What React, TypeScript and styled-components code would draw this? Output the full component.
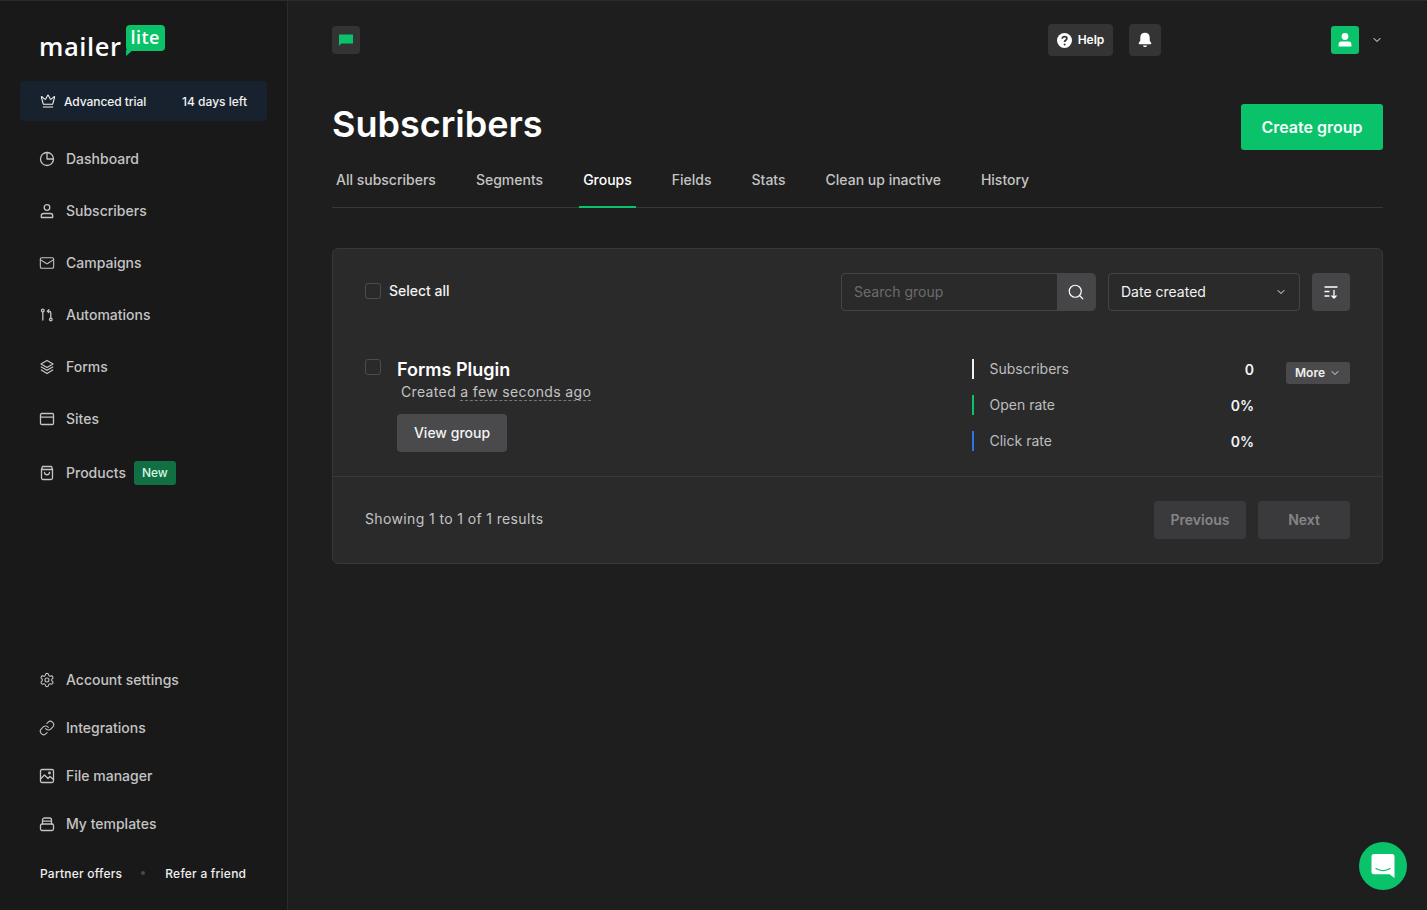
import React from "react"
import styled, { createGlobalStyle } from "styled-components"
import { Crown, Mail, Settings, Link, Search, ChevronDown } from "lucide-react"

const Global = createGlobalStyle`
  html, body { margin: 0; padding: 0; height: 100%; background: #1e1e1e; }
  body { font-family: Inter, "Liberation Sans", sans-serif; color: #fff; }
  * { box-sizing: border-box; }
`

const Page = styled.div`
  display: flex;
  height: 910px;
  overflow: hidden;
  border-top: 1px solid #2b2b2b;
`
const Sidebar = styled.aside`
  width: 288px;
  flex: none;
  background: #191919;
  border-right: 1px solid #2b2b2b;
  padding: 24px 20px 0;
  display: flex;
  flex-direction: column;
`
const LogoRow = styled.div`
  display: flex;
  align-items: flex-start;
  height: 56px;
  padding-left: 19px;
`
const LogoWord = styled.span`
  font-family: "Open Sans", sans-serif;
  font-size: 25.500px;
  font-weight: 600;
  letter-spacing: 0.600px;
  line-height: 32px;
  margin-top: 5px;
  color: #fff;
`
const LogoBubble = styled.span`
  position: relative;
  margin-left: 4px;
  width: 39px;
  height: 26px;
  background: #09c269;
  border-radius: 4px;
  font-family: "Open Sans", sans-serif;
  font-size: 18px;
  font-weight: 600;
  line-height: 25px;
  text-align: center;
  letter-spacing: 0.500px;
  &::after {
    content: "";
    position: absolute;
    left: 0;
    top: 25px;
    border-top: 6px solid #09c269;
    border-right: 7px solid transparent;
  }
`
const TrialBox = styled.div`
  height: 40px;
  background: #18222f;
  border-radius: 4px;
  display: flex;
  align-items: center;
  padding: 0 20px;
  font-size: 12px;
  font-weight: 500;
  color: #f2f2f2;
  margin-bottom: 12px;
  svg { margin-right: 8px; }
`
const TrialLeft = styled.span`
  flex: 1;
  letter-spacing: -0.060px;
`
const NavItem = styled.div<{ $h?: number; $gapTop?: number }>`
  display: flex;
  align-items: center;
  height: ${(p) => p.$h || 52}px;
  margin-top: ${(p) => p.$gapTop || 0}px;
  padding-left: 19px;
  font-size: 14px;
  font-weight: 500;
  color: #c4c4c4;
  svg { width: 16px; height: 16px; margin-right: 11px; flex: none; }
`
const NavLabel = styled.span`
  margin-bottom: 2px;
`
const NewBadge = styled.span`
  margin-left: 8px;
  height: 24px;
  padding: 0 8px;
  border-radius: 3px;
  background: #106f43;
  color: #d8f6e6;
  font-size: 12px;
  line-height: 24px;
`
const BottomNav = styled.div`
  margin-top: auto;
`
const FooterLinks = styled.div`
  display: flex;
  align-items: center;
  height: 50px;
  margin-bottom: 12px;
  padding-left: 20px;
  font-size: 12px;
  font-weight: 500;
  letter-spacing: 0.220px;
  color: #efefef;
`
const Dot = styled.span`
  width: 4px;
  height: 4px;
  border-radius: 50%;
  background: #4a4a4a;
  margin: 0 20px 0 19px;
`
const Main = styled.main`
  flex: 1;
  padding: 0 44px;
  min-width: 0;
`
const TopBar = styled.div`
  display: flex;
  align-items: center;
  height: 78px;
`
const ChatBtn = styled.div`
  width: 28px;
  height: 28px;
  border-radius: 4px;
  background: #333334;
  display: flex;
  align-items: center;
  justify-content: center;
`
const HelpBtn = styled.div`
  margin-left: auto;
  height: 32px;
  width: 65px;
  border-radius: 4px;
  background: #343435;
  display: flex;
  align-items: center;
  justify-content: center;
  gap: 6px;
  font-size: 12px;
  font-weight: 600;
`
const HelpLabel = styled.span`
  margin-bottom: 2px;
`
const BellBtn = styled.div`
  margin-left: 16px;
  width: 32px;
  height: 32px;
  border-radius: 4px;
  background: #343435;
  display: flex;
  align-items: center;
  justify-content: center;
`
const Avatar = styled.div`
  margin-left: 170px;
  width: 28px;
  height: 28px;
  border-radius: 3px;
  background: #09c269;
  display: flex;
  align-items: center;
  justify-content: center;
`
const AvatarCaret = styled.div`
  margin-left: 12px;
  width: 12px;
  display: flex;
  color: #fff;
`
const TitleRow = styled.div`
  display: flex;
  align-items: flex-start;
  justify-content: space-between;
  height: 72px;
`
const Title = styled.h1`
  margin: 23px 0 0;
  font-size: 36px;
  font-weight: 600;
  line-height: 44px;
  color: #fff;
`
const CreateBtn = styled.div`
  margin-top: 25px;
  width: 142px;
  height: 46px;
  border-radius: 3px;
  background: #09c269;
  font-size: 16px;
  font-weight: 600;
  line-height: 46px;
  text-align: center;
  color: #f4fff9;
`
const Tabs = styled.nav`
  display: flex;
  gap: 32px;
  height: 57px;
  border-bottom: 1px solid #38383a;
  align-items: flex-start;
`
const Tab = styled.div<{ $active?: boolean }>`
  padding: 0 4px;
  font-size: 14px;
  font-weight: 500;
  line-height: 58px;
  height: 57px;
  color: ${(p) => (p.$active ? "#fff" : "#c4c4c4")};
  border-bottom: 2px solid ${(p) => (p.$active ? "#09c269" : "transparent")};
`
const Card = styled.section`
  margin-top: 40px;
  height: 316px;
  background: #2a2a2b;
  border: 1px solid #38383a;
  border-radius: 6px;
`
const Toolbar = styled.div`
  display: flex;
  align-items: flex-start;
  padding: 24px 32px 0;
  height: 110px;
`
const Check = styled.span`
  width: 16px;
  height: 16px;
  border: 1px solid #4b4b4d;
  border-radius: 3px;
  flex: none;
`
const SelectAll = styled.label`
  display: flex;
  align-items: center;
  gap: 8px;
  height: 36px;
  font-size: 14px;
  font-weight: 500;
  color: #f2f2f2;
  margin-right: auto;
`
const SelectAllText = styled.span`
  margin-bottom: 2px;
`
const SearchBox = styled.div`
  display: flex;
  width: 255px;
  height: 38px;
  border: 1px solid #444446;
  border-radius: 4px;
  overflow: hidden;
`
const SearchText = styled.div`
  flex: 1;
  padding-left: 12px;
  font-size: 14px;
  line-height: 36px;
  color: #6c6c6e;
`
const SearchBtn = styled.div`
  width: 38px;
  background: #464648;
  display: flex;
  align-items: center;
  justify-content: center;
`
const SortSelect = styled.div`
  margin-left: 12px;
  width: 192px;
  height: 38px;
  border: 1px solid #444446;
  border-radius: 4px;
  display: flex;
  align-items: center;
  justify-content: space-between;
  padding: 0 12px;
  font-size: 14px;
  font-weight: 400;
  color: #f2f2f2;
`
const SortLabel = styled.span`
  margin-bottom: 2px;
`
const OrderBtn = styled.div`
  margin-left: 12px;
  width: 38px;
  height: 38px;
  border-radius: 4px;
  background: #464648;
  display: flex;
  align-items: center;
  justify-content: center;
`
const Row = styled.div`
  display: flex;
  height: 117px;
  padding: 0 32px;
`
const RowCheck = styled(Check)`
  margin-right: 16px;
`
const RowInfo = styled.div`
  width: 575px;
  flex: none;
`
const RowTitle = styled.div`
  margin-top: -1px;
  font-size: 18px;
  font-weight: 600;
  line-height: 24px;
  color: #fff;
`
const Created = styled.div`
  margin-top: -1px;
  padding-left: 4px;
  font-size: 14px;
  letter-spacing: 0.350px;
  line-height: 22px;
  color: #c4c4c4;
`
const Dashed = styled.span`
  border-bottom: 1px dashed #77777a;
`
const ViewBtn = styled.div`
  margin-top: 11px;
  width: 110px;
  height: 38px;
  border-radius: 4px;
  background: #4a4a4c;
  font-size: 14px;
  font-weight: 500;
  line-height: 38px;
  text-align: center;
  color: #f4f4f4;
`
const Stats = styled.div`
  width: 282px;
  flex: none;
  display: flex;
  flex-direction: column;
  gap: 16px;
`
const Stat = styled.div<{ $color: string }>`
  display: flex;
  justify-content: space-between;
  height: 20px;
  padding-left: 15.500px;
  border-left: 2px solid ${(p) => p.$color};
  font-size: 14px;
  line-height: 20px;
  color: #bdbdbf;
`
const StatValue = styled.span`
  font-weight: 600;
  line-height: 22px;
  color: #f4f4f4;
`
const MoreBtn = styled.div`
  margin-left: auto;
  margin-top: 3px;
  width: 64px;
  height: 22px;
  border-radius: 3px;
  background: #4a4a4c;
  display: flex;
  align-items: center;
  justify-content: center;
  gap: 4px;
  padding-bottom: 1px;
  font-size: 12px;
  font-weight: 600;
  color: #f0f0f0;
`
const CardFooter = styled.div`
  display: flex;
  align-items: center;
  height: 87px;
  padding: 0 32px;
  border-top: 1px solid #38383a;
`
const Showing = styled.div`
  margin-right: auto;
  margin-bottom: 3px;
  font-size: 14px;
  letter-spacing: 0.370px;
  color: #c4c4c4;
`
const PageBtn = styled.div`
  margin-left: 12px;
  width: 92px;
  height: 38px;
  border-radius: 4px;
  background: #3a3a3c;
  font-size: 14px;
  font-weight: 600;
  line-height: 38px;
  text-align: center;
  color: #858587;
`
const Fab = styled.div`
  position: fixed;
  right: 20px;
  bottom: 20px;
  width: 48px;
  height: 48px;
  border-radius: 50%;
  background: #09c269;
  display: flex;
  align-items: center;
  justify-content: center;
`

const Ico = ({ children }: { children: React.ReactNode }) => (
  <svg viewBox="0 0 16 16" fill="none" stroke="currentColor" strokeWidth="1.300" strokeLinecap="round" strokeLinejoin="round">
    {children}
  </svg>
)

const mainNav: { label: string; icon: React.ReactNode; badge?: boolean }[] = [
  {
    label: "Dashboard",
    icon: (
      <Ico>
        <circle cx="8" cy="8" r="6.500" />
        <path d="M8 1.500V8h6.500" />
      </Ico>
    ),
  },
  {
    label: "Subscribers",
    icon: (
      <Ico>
        <circle cx="8" cy="4.500" r="2.800" />
        <path d="M4.500 10.500h7c1.200 0 2.200 1 2.200 2.200v1.800H2.300v-1.800c0-1.200 1-2.200 2.200-2.200z" />
      </Ico>
    ),
  },
  { label: "Campaigns", icon: <Mail strokeWidth={1.600} /> },
  {
    label: "Automations",
    icon: (
      <Ico>
        <circle cx="3.800" cy="3.500" r="1.300" />
        <path d="M3.800 5V13" />
        <circle cx="11.800" cy="12.500" r="1.300" />
        <path d="M11.800 11V6c0-1.100-.7-1.800-1.800-1.800H8.500M9.800 2.800 8.400 4.200l1.400 1.400" />
      </Ico>
    ),
  },
  {
    label: "Forms",
    icon: (
      <Ico>
        <path d="M8 1.500 14 5 8 8.500 2 5z" />
        <path d="M2.300 8 8 11.300 13.700 8" />
        <path d="M2.300 11 8 14.500 13.700 11" />
      </Ico>
    ),
  },
  {
    label: "Sites",
    icon: (
      <Ico>
        <rect x="1.500" y="2.500" width="13" height="11" rx="1.200" />
        <path d="M1.500 6.200h13" />
      </Ico>
    ),
  },
  {
    label: "Products",
    badge: true,
    icon: (
      <Ico>
        <path d="M3.500 1.500h9l1 3v8.500a1.500 1.500 0 0 1-1.500 1.500H4A1.500 1.500 0 0 1 2.500 13V4.500z" />
        <path d="M2.500 4.500h11M5.500 7.500c.3 3 4.700 3 5 0" />
      </Ico>
    ),
  },
]

const bottomNav: { label: string; icon: React.ReactNode }[] = [
  { label: "Account settings", icon: <Settings strokeWidth={1.600} /> },
  { label: "Integrations", icon: <Link strokeWidth={1.600} /> },
  {
    label: "File manager",
    icon: (
      <Ico>
        <rect x="1.500" y="1.500" width="13" height="13" rx="1.500" />
        <path d="M1.500 11 5.500 7l3.500 3.500L11 8.500l3.500 3" />
        <circle cx="10.500" cy="5" r=".8" />
      </Ico>
    ),
  },
  {
    label: "My templates",
    icon: (
      <Ico>
        <rect x="1.500" y="8" width="13" height="6.500" rx="1.500" />
        <path d="M3.500 8V4a2 2 0 0 1 2-2h5a2 2 0 0 1 2 2v4M3.500 5.200h9" />
      </Ico>
    ),
  },
]

const tabs = ["All subscribers", "Segments", "Groups", "Fields", "Stats", "Clean up inactive", "History"]

const App = () => {
  return (
    <Page>
      <Global />
      <Sidebar>
        <LogoRow>
          <LogoWord>mailer</LogoWord>
          <LogoBubble>lite</LogoBubble>
        </LogoRow>
        <TrialBox>
          <Crown size={16} strokeWidth={1.600} />
          <TrialLeft>Advanced trial</TrialLeft>
          <span>14 days left</span>
        </TrialBox>
        {mainNav.map((n) => (
          <NavItem key={n.label} $gapTop={n.badge ? 2 : 0}>
            {n.icon}
            <NavLabel>{n.label}</NavLabel>
            {n.badge && <NewBadge>New</NewBadge>}
          </NavItem>
        ))}
        <BottomNav>
          {bottomNav.map((n) => (
            <NavItem key={n.label} $h={48}>
              {n.icon}
              <NavLabel>{n.label}</NavLabel>
            </NavItem>
          ))}
          <FooterLinks>
            <span>Partner offers</span>
            <Dot />
            <span>Refer a friend</span>
          </FooterLinks>
        </BottomNav>
      </Sidebar>
      <Main>
        <TopBar>
          <ChatBtn>
            <svg width="16" height="14" viewBox="0 0 16 14">
              <path d="M1 1.500h14v9H3.200L1 13z" fill="#09c269" />
            </svg>
          </ChatBtn>
          <HelpBtn>
            <svg width="15" height="15" viewBox="0 0 15 15">
              <circle cx="7.500" cy="7.500" r="7.500" fill="#fff" />
              <path d="M5.200 5.800c0-1.400 1-2.200 2.400-2.200s2.300.9 2.300 2c0 1.700-2.300 1.700-2.300 3.300" fill="none" stroke="#343435" strokeWidth="1.700" />
              <circle cx="7.600" cy="11.400" r="1" fill="#343435" />
            </svg>
            <HelpLabel>Help</HelpLabel>
          </HelpBtn>
          <BellBtn>
            <svg width="14" height="16" viewBox="0 0 14 16" fill="#fff">
              <path d="M7 .8C4 .8 2.300 2.800 2.300 5.400v3L.8 11c-.3.600 0 1.200.6 1.200h11.200c.6 0 .9-.6.600-1.200l-1.500-2.600v-3C11.700 2.800 10 .8 7 .8z" />
              <path d="M5 13.400h4c-.2 1-1 1.600-2 1.600s-1.800-.6-2-1.600z" />
            </svg>
          </BellBtn>
          <Avatar>
            <svg width="16" height="16" viewBox="0 0 16 16" fill="#fff">
              <circle cx="8" cy="4.500" r="3.400" />
              <path d="M4 9.500h8c1.300 0 2.400 1 2.400 2.400V14.500H1.600v-2.600C1.600 10.500 2.700 9.500 4 9.500z" />
            </svg>
          </Avatar>
          <AvatarCaret>
            <ChevronDown size={12} strokeWidth={2} />
          </AvatarCaret>
        </TopBar>
        <TitleRow>
          <Title>Subscribers</Title>
          <CreateBtn>Create group</CreateBtn>
        </TitleRow>
        <Tabs>
          {tabs.map((t) => (
            <Tab key={t} $active={t === "Groups"}>
              {t}
            </Tab>
          ))}
        </Tabs>
        <Card>
          <Toolbar>
            <SelectAll>
              <Check />
              <SelectAllText>Select all</SelectAllText>
            </SelectAll>
            <SearchBox>
              <SearchText>Search group</SearchText>
              <SearchBtn>
                <Search size={18} color="#fff" strokeWidth={1.600} />
              </SearchBtn>
            </SearchBox>
            <SortSelect>
              <SortLabel>Date created</SortLabel>
              <ChevronDown size={12} strokeWidth={2} />
            </SortSelect>
            <OrderBtn>
              <svg width="16" height="16" viewBox="0 0 16 16" fill="none" stroke="#fff" strokeWidth="1.300">
                <path d="M1.500 3h13M1.500 7.500h5M1.500 12h5M11 6v8M8.500 11.500 11 14l2.500-2.500" />
              </svg>
            </OrderBtn>
          </Toolbar>
          <Row>
            <RowCheck />
            <RowInfo>
              <RowTitle>Forms Plugin</RowTitle>
              <Created>
                Created <Dashed>a few seconds ago</Dashed>
              </Created>
              <ViewBtn>View group</ViewBtn>
            </RowInfo>
            <Stats>
              <Stat $color="#f0f0f0">
                Subscribers
                <StatValue>0</StatValue>
              </Stat>
              <Stat $color="#09c269">
                Open rate
                <StatValue>0%</StatValue>
              </Stat>
              <Stat $color="#2f74e0">
                Click rate
                <StatValue>0%</StatValue>
              </Stat>
            </Stats>
            <MoreBtn>
              More
              <ChevronDown size={12} strokeWidth={1.800} />
            </MoreBtn>
          </Row>
          <CardFooter>
            <Showing>Showing 1 to 1 of 1 results</Showing>
            <PageBtn>Previous</PageBtn>
            <PageBtn>Next</PageBtn>
          </CardFooter>
        </Card>
      </Main>
      <Fab>
        <svg width="24" height="26" viewBox="0 0 24 26">
          <path d="M3 1h18a2.500 2.500 0 0 1 2.500 2.500V25l-5-3.800H3A2.500 2.500 0 0 1 .5 18.700V3.500A2.500 2.500 0 0 1 3 1z" fill="#fff" />
          <path d="M5 15.500c4 2.700 10 2.700 14 0" fill="none" stroke="#09c269" strokeWidth="1.300" strokeLinecap="round" />
        </svg>
      </Fab>
    </Page>
  )
}

export default App
